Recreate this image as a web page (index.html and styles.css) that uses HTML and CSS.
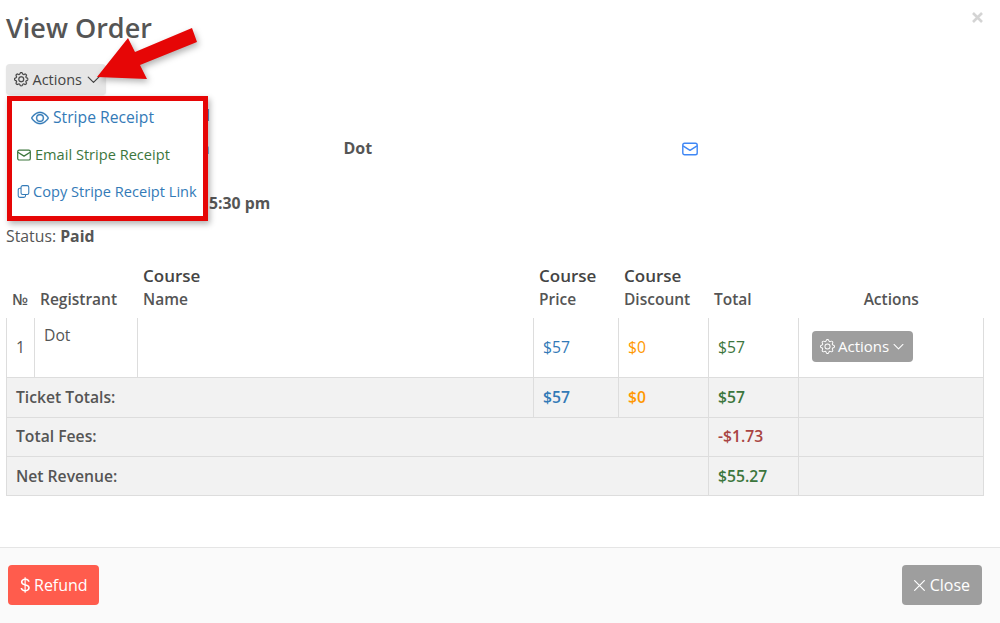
FILE: index.html
```html
<!DOCTYPE html>
<html lang="en">
<head>
<meta charset="utf-8">
<title>View Order</title>
<link rel="stylesheet" href="styles.css">
</head>
<body>
<svg class="defs" width="0" height="0" aria-hidden="true">
  <symbol id="gear" viewBox="0 0 16 16"><path d="M8 4.754a3.246 3.246 0 1 0 0 6.492 3.246 3.246 0 0 0 0-6.492zM5.754 8a2.246 2.246 0 1 1 4.492 0 2.246 2.246 0 0 1-4.492 0z"/><path d="M9.796 1.343c-.527-1.79-3.065-1.79-3.592 0l-.094.319a.873.873 0 0 1-1.255.52l-.292-.16c-1.64-.892-3.433.902-2.54 2.541l.159.292a.873.873 0 0 1-.52 1.255l-.319.094c-1.79.527-1.79 3.065 0 3.592l.319.094a.873.873 0 0 1 .52 1.255l-.16.292c-.892 1.64.901 3.434 2.541 2.54l.292-.159a.873.873 0 0 1 1.255.52l.094.319c.527 1.79 3.065 1.79 3.592 0l.094-.319a.873.873 0 0 1 1.255-.52l.292.16c1.64.893 3.434-.902 2.54-2.541l-.159-.292a.873.873 0 0 1 .52-1.255l.319-.094c1.79-.527 1.79-3.065 0-3.592l-.319-.094a.873.873 0 0 1-.52-1.255l.16-.292c.893-1.64-.902-3.433-2.541-2.54l-.292.159a.873.873 0 0 1-1.255-.52l-.094-.319zm-2.633.283c.246-.835 1.428-.835 1.674 0l.094.319a1.873 1.873 0 0 0 2.693 1.115l.291-.16c.764-.415 1.6.42 1.184 1.185l-.159.292a1.873 1.873 0 0 0 1.116 2.692l.318.094c.835.246.835 1.428 0 1.674l-.319.094a1.873 1.873 0 0 0-1.115 2.693l.16.291c.415.764-.42 1.6-1.185 1.184l-.291-.159a1.873 1.873 0 0 0-2.693 1.116l-.094.318c-.246.835-1.428.835-1.674 0l-.094-.319a1.873 1.873 0 0 0-2.692-1.115l-.292.16c-.764.415-1.6-.42-1.184-1.185l.159-.291A1.873 1.873 0 0 0 1.945 8.93l-.319-.094c-.835-.246-.835-1.428 0-1.674l.319-.094A1.873 1.873 0 0 0 3.06 4.377l-.16-.292c-.415-.764.42-1.6 1.185-1.184l.292.159a1.873 1.873 0 0 0 2.692-1.115l.094-.319z"/></symbol>
  <symbol id="chev" viewBox="0 0 16 16"><path fill="none" stroke="currentColor" stroke-width="1.500" stroke-linecap="round" stroke-linejoin="round" d="M1.500 5 8 11.500 14.500 5"/></symbol>
  <symbol id="eye" viewBox="0 0 16 16"><path d="M16 8s-3-5.500-8-5.500S0 8 0 8s3 5.500 8 5.500S16 8 16 8zM1.173 8a13.133 13.133 0 0 1 1.660-2.043C4.120 4.668 5.880 3.500 8 3.500c2.120 0 3.879 1.168 5.168 2.457A13.133 13.133 0 0 1 14.828 8c-.058.087-.122.183-.195.288-.335.480-.830 1.120-1.465 1.755C11.879 11.332 10.119 12.500 8 12.500c-2.120 0-3.879-1.168-5.168-2.457A13.134 13.134 0 0 1 1.172 8z"/><path d="M8 5.500a2.500 2.500 0 1 0 0 5 2.500 2.500 0 0 0 0-5zM4.500 8a3.500 3.500 0 1 1 7 0 3.500 3.500 0 0 1-7 0z"/></symbol>
  <symbol id="env" viewBox="0 0 16 16"><g fill="none" stroke="currentColor" stroke-width="1.400" stroke-linejoin="round"><rect x=".8" y="2.300" width="14.400" height="11.400" rx="1.800"/><path d="M1 4.800 8 9.300l7-4.500"/></g></symbol>
  <symbol id="copy" viewBox="0 0 16 16"><g fill="none" stroke="currentColor" stroke-width="1.300" stroke-linejoin="round"><rect x="5" y=".8" width="9.500" height="11" rx="2"/><path d="M5 4H3.500a2 2 0 0 0-2 2v7.200a2 2 0 0 0 2 2h5a2 2 0 0 0 2-2v-1.400"/></g></symbol>
  <symbol id="x" viewBox="2 2 12 12"><path fill="none" stroke="currentColor" stroke-width="1.300" stroke-linecap="round" d="M2.700 2.700 13.300 13.300M13.300 2.700 2.700 13.300"/></symbol>
  <symbol id="xbold" viewBox="0 0 11 11"><path fill="none" stroke="currentColor" stroke-width="2.600" d="M1 1 10 10M10 1 1 10"/></symbol>
  <symbol id="dollar" viewBox="3.500 0.500 9 15"><path d="M4 10.781c.148 1.667 1.513 2.850 3.591 3.003V15h1.043v-1.216c2.270-.179 3.678-1.438 3.678-3.300 0-1.590-.947-2.510-2.956-3.028l-.722-.187V3.467c1.122.110 1.879.714 2.070 1.616h1.470c-.166-1.600-1.540-2.748-3.540-2.875V1H7.591v1.233c-1.939.230-3.270 1.472-3.270 3.156 0 1.454.966 2.483 2.661 2.917l.610.162v4.031c-1.149-.170-1.940-.800-2.131-1.718H4zm3.391-3.836c-1.043-.263-1.600-.825-1.600-1.616 0-.944.704-1.641 1.800-1.828v3.495l-.200-.050zm1.591 1.872c1.287.323 1.852.859 1.852 1.769 0 1.097-.826 1.828-2.200 1.939V8.730l.348.086z"/></symbol>
</svg>

<main class="modal">
  <header class="modal-head">
    <h1 class="title">View Order</h1>
    <button class="dismiss" type="button" aria-label="Close"><svg class="ico"><use href="#xbold"/></svg></button>
  </header>

  <section class="modal-body">
    <div class="menu-wrap">
      <button class="btn-actions" type="button">
        <svg class="ico"><use href="#gear"/></svg>
        <span>Actions</span>
        <svg class="ico"><use href="#chev"/></svg>
      </button>
      <ul class="menu">
        <li class="menu-item item-eye"><svg class="ico ico-eye"><use href="#eye"/></svg>Stripe Receipt</li>
        <li class="menu-item item-mail"><svg class="ico ico-sm"><use href="#env"/></svg>Email Stripe Receipt</li>
        <li class="menu-item item-copy"><svg class="ico ico-sm"><use href="#copy"/></svg>Copy Stripe Receipt Link</li>
      </ul>
    </div>

    <div class="info">
      <div class="info-row row-peek"><strong>l</strong></div>
      <div class="info-row row-name">
        <strong class="peek-a">a</strong>
        <span class="info-name">Dot</span>
        <svg class="ico ico-mail"><use href="#env"/></svg>
      </div>
      <div class="info-row row-date"><strong>5:30 pm</strong></div>
      <div class="info-row row-status">Status: <strong>Paid</strong></div>
    </div>

    <table class="orders">
      <colgroup>
        <col class="c1"><col class="c2"><col class="c3"><col class="c4"><col class="c5"><col class="c6"><col class="c7">
      </colgroup>
      <thead>
        <tr>
          <th>№</th>
          <th>Registrant</th>
          <th><span class="dark">Course</span><br>Name</th>
          <th><span class="dark">Course</span><br>Price</th>
          <th><span class="dark">Course</span><br>Discount</th>
          <th>Total</th>
          <th class="center">Actions</th>
        </tr>
      </thead>
      <tbody>
        <tr class="row-main">
          <td>1</td>
          <td class="top">Dot</td>
          <td></td>
          <td class="blue">$57</td>
          <td class="orange">$0</td>
          <td class="green">$57</td>
          <td>
            <button class="btn-grey" type="button">
              <svg class="ico"><use href="#gear"/></svg>
              <span>Actions</span>
              <svg class="ico ico-xs"><use href="#chev"/></svg>
            </button>
          </td>
        </tr>
        <tr class="row-sum row-tickets">
          <td colspan="3">Ticket Totals:</td>
          <td class="blue">$57</td>
          <td class="orange">$0</td>
          <td class="green">$57</td>
          <td></td>
        </tr>
        <tr class="row-sum row-fees">
          <td colspan="5">Total Fees:</td>
          <td class="red">-$1.73</td>
          <td></td>
        </tr>
        <tr class="row-sum row-net">
          <td colspan="5">Net Revenue:</td>
          <td class="green">$55.27</td>
          <td></td>
        </tr>
      </tbody>
    </table>
  </section>

  <footer class="modal-foot">
    <button class="btn-foot btn-refund" type="button"><svg class="ico ico-dollar"><use href="#dollar"/></svg>Refund</button>
    <button class="btn-foot btn-close" type="button"><svg class="ico ico-x"><use href="#x"/></svg>Close</button>
  </footer>
</main>

<svg class="arrow" viewBox="0 0 210 90" width="210" height="90" aria-hidden="true">
  <polygon points="97,77 128,38 135,52 192,28 197,42 140,65 147,79"/>
</svg>
</body>
</html>
```

FILE: styles.css
```css
* { box-sizing: border-box; }
html, body { margin: 0; padding: 0; }
body {
  width: 1000px;
  height: 623px;
  overflow: hidden;
  position: relative;
  background: #fff;
  color: #555;
  font-family: "Open Sans", sans-serif;
  font-size: 15.800px;
  line-height: 23px;
}
.defs { position: absolute; }
.ico { width: 1em; height: 1em; fill: currentColor; flex: none; }

.modal { display: flex; flex-direction: column; height: 623px; }
.modal-head { display: flex; justify-content: space-between; padding: 9px 17px 0 6px; height: 64px; }
.title { margin: 0; font-size: 27px; line-height: 38px; font-weight: 600; color: #555; }
.dismiss {
  display: flex; border: 0; background: none; padding: 0; margin: 3px 0 0;
  width: 11px; height: 11px; font-size: 11px; color: #d4d4d4;
}

.modal-body { flex: 1; padding: 0 16px 0 6px; }
.menu-wrap { position: relative; height: 31px; }
.btn-actions {
  display: flex; align-items: center; gap: 4px;
  width: 100px; height: 31px; padding: 0 0 0 8px;
  border: 0; border-radius: 4px; background: #e6e6e6; color: #444;
  font: 400 14.500px "Open Sans", sans-serif;
  box-shadow: 0 1px 2px rgba(0,0,0,.08);
}
.btn-actions .ico:first-child { stroke: currentColor; stroke-width: .3px; }
.btn-actions .ico:last-child { margin-left: 1px; font-size: 13px; }
.menu {
  position: absolute; z-index: 2; left: 1px; top: 32px; width: 201px; height: 125px;
  margin: 0; padding: 0; list-style: none; background: #fff;
  border: 5px solid #e60606;
  box-shadow: 2px 3px 6px rgba(0,0,0,.3);
}
.menu-item { display: flex; align-items: center; white-space: nowrap; font-size: 14.600px; }
.item-eye { color: #337ab7; font-size: 15.700px; gap: 4px; padding-left: 19px; height: 33px; }
.ico-eye { width: 18px; height: 18px; stroke: currentColor; stroke-width: .25px; }
.item-mail { color: #3c763d; gap: 4px; padding-left: 5px; height: 37px; margin-top: 2px; }
.item-copy { color: #337ab7; gap: 3px; padding-left: 5px; height: 37px; }
.ico-sm { width: 14px; height: 14px; }
.item-copy .ico-sm { width: 13px; height: 15px; }

.info { padding-top: 9px; }
.row-peek { padding-left: 199px; height: 23px; margin-bottom: 10px; }
.row-name { display: flex; align-items: center; height: 23px; }
.peek-a { margin-left: 194px; width: 143.500px; flex: none; }
.info-name { font-weight: 700; color: #555; font-size: 16px; }
.ico-mail { margin-left: 309.500px; width: 16px; height: 16px; color: #3f87f5; }
.row-date { padding-left: 203px; margin-top: 32px; }
.row-status { margin-top: 10px; }

.orders { margin-top: 16px; width: 977px; border-collapse: collapse; table-layout: fixed; }
.c1 { width: 28px; } .c2 { width: 103px; } .c3 { width: 396px; } .c4 { width: 85px; }
.c5 { width: 90px; } .c6 { width: 90px; } .c7 { width: 185px; }
th {
  text-align: left; font-size: 15.500px; font-weight: 600; line-height: 23px;
  padding: 0 5px 7px 5.500px; vertical-align: bottom; color: #555; height: 53px;
}
th .dark { color: #444; font-size: 17px; }
th.center { text-align: center; }
td { border: 1px solid #ddd; padding: 0 9px; font-size: 15.700px; }
.row-main td { height: 59px; border-top: 0; }
.row-main td:first-child { padding: 0 6px 0 9px; }
td.top { vertical-align: top; padding-top: 6px; }
.row-sum td { background: #f2f2f2; font-weight: 600; }
.row-tickets td { height: 40px; }
.row-fees td, .row-net td { height: 39px; }
.row-net td { padding-top: 1px; }
.blue { color: #337ab7; }
.orange { color: #ff9800; }
.green { color: #3c763d; }
.red { color: #a94442; }
.btn-grey {
  display: flex; align-items: center; gap: 3px; height: 31px; width: 101px; padding: 0 0 0 8px; margin: 0 0 2px 4px;
  border: 0; border-radius: 4px; background: #9e9e9e; color: #fff;
  font: 400 15px "Open Sans", sans-serif;
}
.ico-xs { font-size: 11px; margin-left: 1px; }

.modal-foot {
  display: flex; justify-content: space-between; align-items: flex-start;
  height: 76px; padding: 17px 18px 0 8px;
  background: #fafafa; border-top: 1px solid #e5e5e5;
}
.btn-foot {
  display: flex; align-items: center; height: 40px; padding: 0 12px;
  border: 0; border-radius: 4px; color: #fff;
  font: 400 16px "Open Sans", sans-serif;
}
.btn-refund { background: #ff5c4d; gap: 4px; padding-right: 11px; }
.btn-close { background: #9e9e9e; gap: 5px; }
.ico-dollar { width: 10px; height: 18px; }
.ico-x { width: 11px; height: 11px; }

.arrow { position: absolute; z-index: 3; left: 0; top: 0; fill: #e60606; filter: drop-shadow(2px 3px 3px rgba(0,0,0,.3)); }
```
